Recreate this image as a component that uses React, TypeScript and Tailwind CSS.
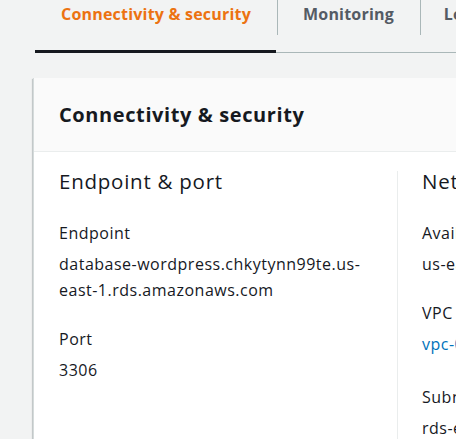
import React from "react";

function Tab({ label, active, sep, width }: { label: string; active?: boolean; sep?: boolean; width: string }) {
  return (
    <div className={`relative h-[52px] shrink-0 flex justify-center ${width}`}>
      {sep && <div className="absolute left-0 top-0 h-[35px] w-px bg-[#aab7b8]" />}
      <span
        className={`pt-[2px] text-[16px] leading-[24px] font-bold tracking-[0.2px] ${active ? "text-[#ec7211]" : "text-[#545b64]"}`}
      >
        {label}
      </span>
      {active && <div className="absolute left-0 right-px bottom-[-1px] h-[3px] bg-[#16191f]" />}
    </div>
  );
}

function Field({
  label,
  children,
  className = "",
  gap = "mt-[7px]",
}: {
  label: string;
  children: React.ReactNode;
  className?: string;
  gap?: string;
}) {
  return (
    <div className={className}>
      <div className="text-[16px] leading-[22px] tracking-[0.5px] text-[#16191f]">{label}</div>
      <div className={`${gap} text-[16px] leading-[26px] tracking-[0.5px] text-[#16191f]`}>{children}</div>
    </div>
  );
}

export default function App() {
  return (
    <div className="w-[456px] h-[439px] overflow-hidden bg-[#f2f3f3] font-['Open_Sans',sans-serif]">
      <div className="ml-[35px] flex border-b border-[#aab7b8] whitespace-nowrap w-[600px]">
        <Tab label="Connectivity & security" active width="w-[242px]" />
        <Tab label="Monitoring" sep width="w-[143px]" />
        <Tab label="Logs & events" sep width="w-[160px]" />
      </div>
      <div className="ml-[33px] mt-[25px] w-[700px] bg-white border-l border-[#d5dbdb] shadow-[0_1px_1px_0_rgba(0,28,36,0.3),-1px_1px_1px_0_rgba(0,28,36,0.15)]">
        <div className="h-[74px] bg-[#fafafa] border-b border-[#eaeded] px-[25px] flex items-center">
          <h2 className="text-[20px] leading-[28px] font-bold tracking-[0.6px] text-[#16191f]">
            Connectivity &amp; security
          </h2>
        </div>
        <div className="grid grid-cols-[363px_1fr] pt-[19px] pb-[40px] whitespace-nowrap">
          <div className="px-[25px]">
            <h3 className="mt-[-4px] text-[20.5px] leading-[28px] tracking-[0.75px] text-[#16191f]">
              Endpoint &amp; port
            </h3>
            <Field label="Endpoint" className="mt-[27px]">
              database-wordpress.chkytynn99te.us-
              <br />
              east-1.rds.amazonaws.com
            </Field>
            <Field label="Port" className="mt-[25px]">
              3306
            </Field>
          </div>
          <div className="border-l border-[#eaeded] pl-[24px]">
            <h3 className="mt-[-4px] text-[20.5px] leading-[28px] tracking-[0.75px] text-[#16191f]">Networking</h3>
            <Field label="Availability Zone" className="mt-[27px]">
              us-east-1a
            </Field>
            <Field label="VPC" className="mt-[25px]">
              <span className="text-[#0073bb]">vpc-0a1b2c3d</span>
            </Field>
            <Field label="Subnet group" className="mt-[29px]">
              rds-ec2-db-subnet-group-1
            </Field>
          </div>
        </div>
      </div>
    </div>
  );
}
